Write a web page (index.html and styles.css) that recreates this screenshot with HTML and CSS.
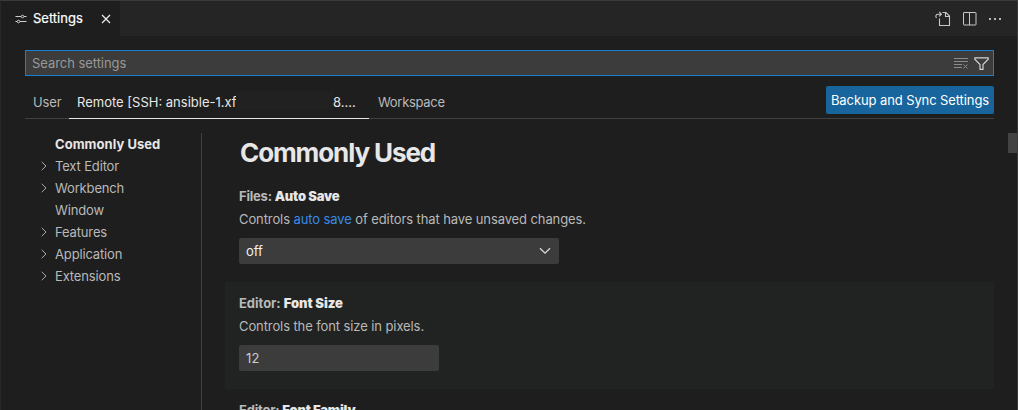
FILE: index.html
```html
<!DOCTYPE html>
<html lang="en">
<head>
<meta charset="utf-8">
<title>Settings</title>
<link rel="stylesheet" href="styles.css">
</head>
<body>
<div class="editor">
  <header class="tabbar">
    <div class="tab">
      <svg class="tab-icon" width="12" height="12" viewBox="0 0 12 12" fill="none" stroke="#d0d0d0"><path d="M.5 3.5H6M9 3.5h2.5M.5 8.5H2M5 8.5h6.500"/><circle cx="7.500" cy="3.500" r="1.300"/><circle cx="3.500" cy="8.500" r="1.300"/></svg>
      <span class="tab-label">Settings</span>
      <svg class="tab-close" width="10" height="10" viewBox="0 0 10 10" fill="none" stroke="#f0f0f0" stroke-width="1.150"><path d="M1 1l8 8M9 1L1 9"/></svg>
    </div>
    <div class="actions">
      <svg width="16" height="16" viewBox="0 0 16 16" fill="none" stroke="#c8c8c8" stroke-width="1.100"><path d="M4.500 7.500v7h10V5L11 1.500H7.500M10.500 1.500v4h4"/><path d="M1.500 7C.2 5 1 3.200 3.200 3.200H6M4.200 1L6.400 3.200 4.200 5.400"/></svg>
      <svg width="14" height="14" viewBox="0 0 14 14" fill="none" stroke="#c8c8c8"><rect x=".5" y=".5" width="12.500" height="12.500" rx=".5"/><path d="M6.500 .5v12.500"/></svg>
      <svg width="12" height="4" viewBox="0 0 12 4" fill="#b8b8b8"><path d="M0 1h2v2H0zM5 1h2v2H5zM10 1h2v2h-2z"/></svg>
    </div>
  </header>
  <main class="settings">
    <div class="search">
      <span class="placeholder">Search settings</span>
      <svg class="clear" width="15" height="12" viewBox="0 0 15 12" fill="none" stroke="#8c8c8c"><path d="M0 1.500h14M0 4.500h14M0 7.500h8M0 10.500h8M9.500 7.500l4 4M13.500 7.500l-4 4"/></svg>
      <svg class="filter" width="15" height="13" viewBox="0 0 15 13" fill="none" stroke="#d2d2d2" stroke-width="1.150"><path d="M.8 .8h13.400v1.400L9 7.500v4.800H6V7.500L.8 2.200z"/></svg>
    </div>
    <nav class="scopes">
      <span class="scope user">User</span>
      <span class="scope active"><span class="remote">Remote [SSH: ansible-1.xf</span><span class="redacted"></span><span>8....</span></span>
      <span class="scope workspace">Workspace</span>
      <button class="sync">Backup and Sync Settings</button>
    </nav>
    <div class="body">
      <ul class="toc">
        <li class="selected"><i></i><span>Commonly Used</span></li>
        <li><svg class="chev" viewBox="0 0 6 10"><path d="M.7 .8L5 5 .7 9.200"/></svg><span>Text Editor</span></li>
        <li><svg class="chev" viewBox="0 0 6 10"><path d="M.7 .8L5 5 .7 9.200"/></svg><span>Workbench</span></li>
        <li><i></i><span>Window</span></li>
        <li><svg class="chev" viewBox="0 0 6 10"><path d="M.7 .8L5 5 .7 9.200"/></svg><span>Features</span></li>
        <li><svg class="chev" viewBox="0 0 6 10"><path d="M.7 .8L5 5 .7 9.200"/></svg><span>Application</span></li>
        <li><svg class="chev" viewBox="0 0 6 10"><path d="M.7 .8L5 5 .7 9.200"/></svg><span>Extensions</span></li>
      </ul>
      <section class="list">
        <h1><span>Commonly Used</span></h1>
        <article class="item">
          <h2><span class="category">Files:</span> <b>Auto Save</b></h2>
          <p><span>Controls <a>auto save</a> of editors that have unsaved changes.</span></p>
          <div class="select"><span>off</span><svg width="12" height="8" viewBox="0 0 12 8" fill="none" stroke="#dcdcdc" stroke-width="1.300"><path d="M1 1.200l5 5 5-5"/></svg></div>
        </article>
        <article class="item focused">
          <h2><span class="category">Editor:</span> <b>Font Size</b></h2>
          <p><span>Controls the font size in pixels.</span></p>
          <div class="number">12</div>
        </article>
        <article class="item">
          <h2><span class="category">Editor:</span> <b>Font Family</b></h2>
        </article>
      </section>
      <div class="scrollbar"></div>
    </div>
  </main>
</div>
</body>
</html>
```
FILE: styles.css
```css
* { box-sizing: border-box; }
body { margin: 0; background: #1e1e1e; color: #b9b9b9; font: 13px/22px Inter, "Liberation Sans", sans-serif; letter-spacing: -.1px; }
svg { display: block; flex: none; }
.editor { width: 1018px; height: 410px; overflow: hidden; border: 1px solid #3a3a3a; border-left-color: #272727; border-bottom: 0; display: flex; flex-direction: column; }
.tabbar { height: 35px; flex: none; background: #252526; display: flex; justify-content: space-between; }
.tab { width: 119px; background: #1e1e1e; color: #fff; display: flex; align-items: center; padding-left: 14px; }
.tab-label { margin: -2px 0 0 6px; width: 68px; letter-spacing: 0; -webkit-text-stroke: .2px; }
.actions { display: flex; align-items: center; gap: 12px; padding-right: 16px; }
.settings { flex: 1; min-height: 0; display: flex; flex-direction: column; padding: 14px 0 0 24px; }
.search { width: 969px; height: 26px; flex: none; background: #3c3c3c; border: 1px solid #1a7fcf; display: flex; align-items: center; padding: 0 4px 0 6px; color: #989898; }
.placeholder { flex: 1; letter-spacing: -.05px; }
.filter { margin-left: 5px; }
.scopes { width: 969px; height: 43px; flex: none; border-bottom: 1px solid #414141; display: flex; }
.scope { padding-top: 15px; height: 43px; white-space: nowrap; }
.user { padding-left: 8px; width: 44px; }
.active { width: 300px; padding-left: 8px; color: #e7e7e7; border-bottom: 1px solid #e7e7e7; display: flex; letter-spacing: 0; }
.remote { width: 159px; }
.redacted { width: 97px; height: 19px; background: #212121; }
.workspace { padding-left: 9px; letter-spacing: -.3px; }
.sync { margin: 10px 0 0 auto; width: 168px; height: 28px; padding: 0; border: 0; border-radius: 2px; background: #17659c; color: #fff; font: inherit; letter-spacing: -.1px; white-space: nowrap; }
.body { flex: 1; min-height: 0; display: flex; }
.toc { list-style: none; margin: 14px 0 0; padding: 0; width: 177px; border-right: 1px solid #414141; }
.toc li { display: flex; align-items: center; height: 22px; padding-left: 16px; letter-spacing: -.15px; }
.toc i { width: 14px; }
.chev { width: 6px; height: 10px; margin-right: 8px; fill: none; stroke: #a8a8a8; }
.toc .selected { color: #e7e7e7; font-weight: 700; letter-spacing: .05px; }
.list { margin-left: 23px; width: 769px; }
h1 { margin: 17px 0 5px 15px; font-size: 26px; line-height: 34px; font-weight: 700; letter-spacing: -1.1px; color: #e7e7e7; }
.item { height: 107px; padding: 10px 14px 0; }
.item.focused { background: #212322; }
h2 { margin: 0; font-size: 13px; line-height: 22px; font-weight: 700; letter-spacing: -.2px; }
.focused h2 { letter-spacing: -.03px; }
h2 b { color: #e7e7e7; }
p { margin: 1px 0 8px; line-height: 22px; }
a { color: #3a8ae4; }
.select, .number { height: 26px; line-height: 26px; background: #3c3c3c; border-radius: 2px; padding: 0 8px 0 7px; }
.select { width: 320px; color: #f0f0f0; display: flex; justify-content: space-between; align-items: center; }
.number { width: 200px; color: #cccccc; letter-spacing: .2px; }
.scrollbar { width: 9px; height: 20px; margin: 14px 0 0 14px; background: #434343; }
```
